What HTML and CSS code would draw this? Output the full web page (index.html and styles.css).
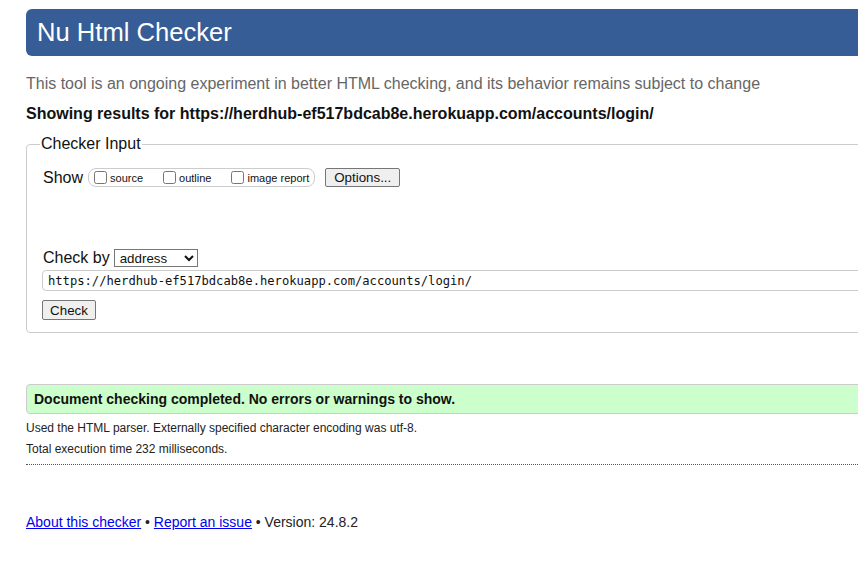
FILE: index.html
```html
<!DOCTYPE html>
<html lang="en">
<head>
<meta charset="utf-8">
<title>Showing results for https://herdhub-ef517bdcab8e.herokuapp.com/accounts/login/ - Nu Html Checker</title>
<link rel="stylesheet" href="styles.css">
</head>
<body>
<div class="page">
  <h1 class="title">Nu Html Checker</h1>
  <p class="desc">This tool is an ongoing experiment in better HTML checking, and its behavior remains subject to change</p>
  <p class="results">Showing results for https://herdhub-ef517bdcab8e.herokuapp.com/accounts/login/</p>
  <form class="form">
    <fieldset class="checker">
      <legend class="legend">Checker Input</legend>
      <div class="show-row">
        <span class="row-label">Show</span>
        <span class="opts">
          <label class="opt"><input type="checkbox" class="cb">source</label>
          <label class="opt"><input type="checkbox" class="cb">outline</label>
          <label class="opt last"><input type="checkbox" class="cb">image report</label>
        </span>
        <button type="button" class="btn btn-options">Options...</button>
      </div>
      <div class="by-row">
        <span class="row-label">Check by</span>
        <select class="sel"><option>address</option></select>
      </div>
      <input type="text" class="url" value="https://herdhub-ef517bdcab8e.herokuapp.com/accounts/login/">
      <div class="check-row"><button type="button" class="btn btn-check">Check</button></div>
    </fieldset>
  </form>
  <p class="success">Document checking completed. No errors or warnings to show.</p>
  <p class="info">Used the HTML parser. Externally specified character encoding was utf-8.</p>
  <p class="info second">Total execution time 232 milliseconds.</p>
  <hr class="sep">
  <p class="footer"><a href="#" class="link">About this checker</a> • <a href="#" class="link">Report an issue</a> • Version: 24.8.2</p>
</div>
</body>
</html>
```
FILE: styles.css
```css
html, body {
  margin: 0;
  padding: 0;
  background: #fff;
  overflow: hidden;
}
body {
  font-family: "Liberation Sans", Arial, sans-serif;
  color: #111;
}
.page {
  width: 1000px;
  padding-left: 26px;
}
.title {
  margin: 9px 0 0 0;
  height: 47px;
  line-height: 47px;
  padding-left: 11px;
  background: #365d95;
  color: #fff;
  font-size: 25.6px;
  font-weight: normal;
  border-radius: 6px 0 0 6px;
}
.desc {
  margin: 19px 0 0 0;
  font-size: 16px;
  line-height: 18px;
  color: #666;
}
.results {
  margin: 12px 0 0 0;
  font-size: 16px;
  line-height: 18px;
  font-weight: bold;
  color: #111;
}
.form {
  margin: 12px 0 0 0;
}
.checker {
  margin: 0;
  padding: 0 0 12px 16px;
  border: 1px solid #ccc;
  border-radius: 4px;
  min-width: 0;
}
.legend {
  padding: 0 1px;
  margin-left: -3px;
  font-size: 16px;
  line-height: 18px;
  color: #111;
}
.show-row {
  margin-top: 15px;
  height: 19px;
  display: flex;
  align-items: center;
}
.row-label {
  font-size: 16px;
  line-height: 18px;
}
.opts {
  margin-left: 5px;
  height: 19px;
  box-sizing: border-box;
  border: 1px solid #ccc;
  border-radius: 8px;
  padding: 0 5px 0 5px;
  display: flex;
  align-items: center;
}
.opt {
  display: flex;
  align-items: center;
  font-size: 11px;
  margin-right: 20px;
  padding-top: 1px;
}
.opt.last {
  margin-right: 0;
}
.cb {
  width: 13px;
  height: 13px;
  margin: -2px 3px 0 0;
}
.btn {
  font-family: "Liberation Sans", Arial, sans-serif;
  font-size: 13.33px;
  color: #111;
  background: #efefef;
  border: 1px solid #767676;
  border-radius: 2px;
  padding: 0 6px;
  box-sizing: border-box;
}
.btn-options {
  margin-left: 10px;
  height: 19px;
  width: 75px;
}
.by-row {
  margin-top: 62px;
  display: flex;
  align-items: center;
  height: 18px;
}
.sel {
  margin-left: 4px;
  width: 84px;
  height: 18px;
  font-family: "Liberation Sans", Arial, sans-serif;
  font-size: 13.33px;
  border: 1px solid #767676;
  border-radius: 0;
  background: #fff;
  color: #111;
  padding: 0 0 0 1px;
}
.url {
  display: block;
  margin: 3px 0 0 -1px;
  width: 1000px;
  height: 21px;
  box-sizing: border-box;
  border: 1px solid #ccc;
  border-radius: 4px;
  padding: 1px 0 0 5px;
  font-family: "DejaVu Sans Mono", "Liberation Mono", monospace;
  font-size: 12.15px;
  color: #111;
}
.check-row {
  margin-top: 9px;
  margin-left: -1px;
}
.btn-check {
  height: 20px;
  width: 54px;
  display: block;
}
.success {
  margin: 51px 0 0 0;
  height: 30px;
  box-sizing: border-box;
  line-height: 28px;
  background: #ccffcc;
  border: 1px solid #ccc;
  border-radius: 4px 0 0 4px;
  padding-left: 7px;
  font-size: 14px;
  font-weight: bold;
  color: #111;
}
.info {
  margin: 7px 0 0 0;
  font-size: 12px;
  line-height: 14px;
  color: #222;
}
.info.second {
  margin-top: 7px;
}
.sep {
  margin: 8px 0 0 0;
  height: 0;
  border: 0;
  border-top: 1px dotted #555;
}
.footer {
  margin: 49px 0 0 0;
  font-size: 14px;
  line-height: 16px;
  color: #222;
}
.link {
  color: #0000ee;
  text-decoration: underline;
}
```
